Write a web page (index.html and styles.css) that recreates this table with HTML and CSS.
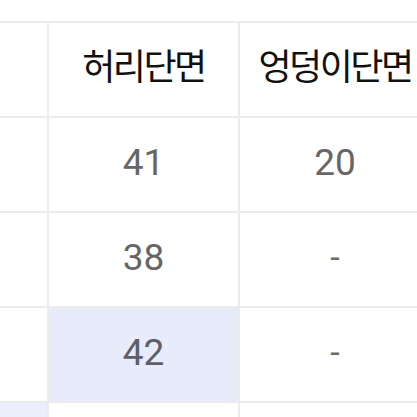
FILE: index.html
```html
<!DOCTYPE html>
<html lang="ko">
<head>
<meta charset="utf-8">
<link rel="stylesheet" href="styles.css">
</head>
<body>
<div class="sheet">
  <div class="cell head"></div>
  <div class="cell head">허리단면</div>
  <div class="cell head">엉덩이단면</div>

  <div class="cell"></div>
  <div class="cell num">41</div>
  <div class="cell num">20</div>

  <div class="cell"></div>
  <div class="cell num">38</div>
  <div class="cell num dash">-</div>

  <div class="cell"></div>
  <div class="cell num sel">42</div>
  <div class="cell num dash">-</div>

  <div class="cell sel-light"></div>
  <div class="cell"></div>
  <div class="cell"></div>
</div>
</body>
</html>
```

FILE: styles.css
```css
html, body {
  margin: 0;
  padding: 0;
  background: #ffffff;
  overflow: hidden;
}

.sheet {
  display: grid;
  grid-template-columns: 120px 189px 190px;
  grid-auto-rows: 93px;
  gap: 2px;
  padding-top: 2px;
  margin-top: 21px;
  margin-left: -73px;
  width: max-content;
  background: #ebebeb;
}

.cell {
  background: #ffffff;
  display: flex;
  align-items: center;
  justify-content: center;
}

.head {
  font-family: "Noto Sans CJK KR", "Noto Sans", sans-serif;
  font-size: 36px;
  line-height: 1;
  letter-spacing: -2.5px;
  color: #111111;
  font-weight: 400;
  padding-bottom: 12px;
}

.num {
  font-family: Roboto, "Liberation Sans", sans-serif;
  font-size: 37px;
  line-height: 1;
  color: #666666;
  padding-bottom: 4px;
}

.dash {
  font-size: 34px;
  color: #6a6a6a;
  padding-bottom: 6px;
}

.sel {
  background: #e8ebfa;
  color: #5c606b;
}

.sel-light {
  background: #eceffb;
}
```
